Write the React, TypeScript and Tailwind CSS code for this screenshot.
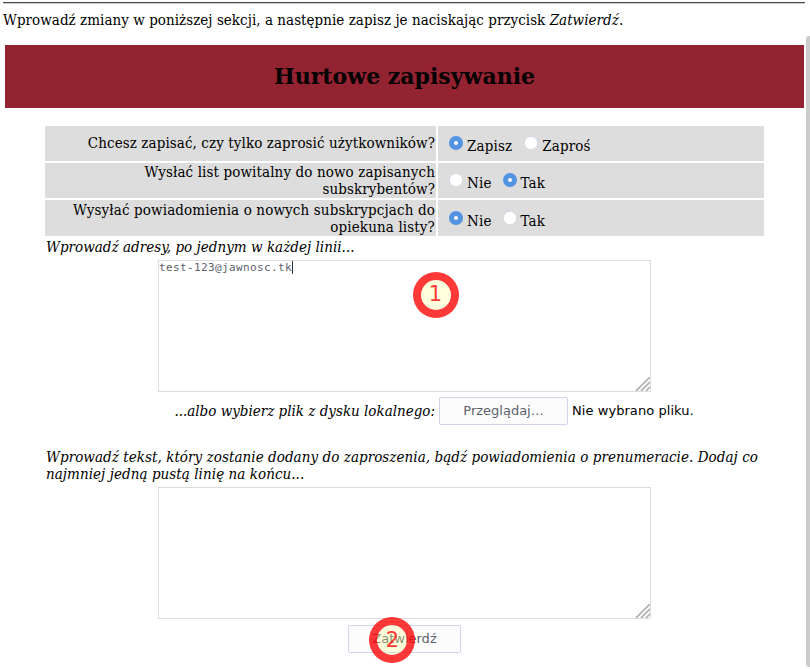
import type { ReactNode } from 'react';

const serif = "font-['DejaVu_Serif_Condensed','DejaVu_Serif',serif] [font-stretch:condensed]";
const sans = "font-['DejaVu_Sans',sans-serif] [font-stretch:normal]";

function Radio({ checked, label }: { checked?: boolean; label: string }) {
  return (
    <label className="flex items-start tracking-[0.14px]">
      <svg width="16" height="16" viewBox="0 0 16 16" className="mr-[3px] shrink-0">
        {checked ? (
          <>
            <circle cx="8" cy="8" r="7" fill="#5294e2" />
            <circle cx="8" cy="8" r="2" fill="#fff" />
          </>
        ) : (
          <circle cx="8" cy="8" r="6.6" fill="#fff" stroke="#cfd6e6" strokeWidth="0.8" />
        )}
      </svg>
      <span className="pt-[3px]">{label}</span>
    </label>
  );
}

function Row({ height, pad, label, children }: { height: string; pad: string; label: ReactNode; children: ReactNode }) {
  return (
    <div className={`flex gap-[2px] ${height}`}>
      <div className="flex w-[391px] items-center justify-end bg-[#dddddd] pr-px text-right whitespace-nowrap">
        <div>{label}</div>
      </div>
      <div className={`flex flex-1 items-start bg-[#dddddd] pl-[10px] ${pad}`}>{children}</div>
    </div>
  );
}

function TextBox({ children }: { children?: ReactNode }) {
  return (
    <div className="relative ml-[113px] h-[132px] w-[493px] border border-[#dcdde3] bg-white">
      {children}
      <svg width="15" height="14" viewBox="0 0 15 14" className="absolute right-0 bottom-0">
        <path d="M1 14L15 0M6 14L15 5M11 14L15 10" stroke="#b4b4b4" strokeWidth="1.8" fill="none" />
      </svg>
    </div>
  );
}

function Marker({ n, place }: { n: number; place: string }) {
  return (
    <div
      className={`absolute flex h-[46px] w-[46px] items-center justify-center rounded-full border-8 border-[#ff0000]/78 bg-[#ffff90]/30 bg-clip-padding text-[21px] leading-none text-[#ff0000]/78 ${sans} ${place}`}
    >
      {n}
    </div>
  );
}

export default function App() {
  return (
    <div className={`relative h-[669px] w-[810px] overflow-hidden bg-white text-[15px] leading-[17px] text-black ${serif}`}>
      <div className="pt-[2px] pl-[3px]">
        <div className="h-[2px] w-[802px] border-t border-[#4a4a4a] bg-[#cccccc]" />
      </div>
      <p className="mt-[8px] pl-[3px] tracking-[0.04px] whitespace-nowrap">
        Wprowadź zmiany w poniższej sekcji, a następnie zapisz je naciskając przycisk <i>Zatwierdź</i>.
      </p>
      <h1 className="mt-[16px] ml-[5px] flex h-[63px] w-[799px] items-center justify-center bg-[#942331] font-['DejaVu_Serif',serif] text-[22px] font-bold [font-stretch:normal]">
        Hurtowe zapisywanie
      </h1>
      <div className="mt-[18px] ml-[45px] w-[719px]">
        <div className="flex flex-col gap-[2px]">
          <Row height="h-[35px]" pad="gap-[11px] pt-[9px]" label={<span className="tracking-[0.09px]">Chcesz zapisać, czy tylko zaprosić użytkowników?</span>}>
            <Radio checked label="Zapisz" />
            <Radio label="Zaproś" />
          </Row>
          <Row
            height="h-[35px]"
            pad="gap-[10px] pt-[9px]"
            label={<span className="tracking-[0.11px]">Wysłać list powitalny do nowo zapisanych<br />subskrybentów?</span>}
          >
            <Radio label="Nie" />
            <Radio checked label="Tak" />
          </Row>
          <Row
            height="h-[36px]"
            pad="gap-[10px] pt-[10px]"
            label={<div className="pt-[2px] tracking-[0.13px]">Wysyłać powiadomienia o nowych subskrypcjach do<br />opiekuna listy?</div>}
          >
            <Radio checked label="Nie" />
            <Radio label="Tak" />
          </Row>
        </div>
        <p className="mt-[3px] h-[21px] pl-px tracking-[0.03px] italic">Wprowadź adresy, po jednym w każdej linii...</p>
        <TextBox>
          <div className="flex items-start font-['DejaVu_Sans_Mono',monospace] text-[11px] leading-[13px] tracking-[0.38px] text-[#5c616c]">
            test-123@jawnosc.tk
            <span className="h-[13px] w-px bg-[#30343c]" />
          </div>
        </TextBox>
        <div className="mt-[5px] flex h-[28px] items-center whitespace-nowrap">
          <span className="w-[390px] pt-px text-right italic">...albo wybierz plik z dysku lokalnego:</span>
          <button className={`ml-[4px] h-[28px] w-[129px] rounded-[2px] border border-[#cfd6e6] bg-[#fbfbfc] pb-[2px] text-[13px] text-[#5c616c] ${sans}`}>
            Przeglądaj…
          </button>
          <span className={`ml-[4px] pb-[2px] text-[13px] tracking-[0.06px] ${sans}`}>Nie wybrano pliku.</span>
        </div>
        <p className="mt-[24px] h-[38px] pl-px tracking-[0.06px] whitespace-nowrap italic">
          Wprowadź tekst, który zostanie dodany do zaproszenia, bądź powiadomienia o prenumeracie. Dodaj co
          <br />
          najmniej jedną pustą linię na końcu...
        </p>
        <TextBox />
        <button className={`mt-[6px] ml-[303px] block h-[28px] w-[113px] rounded-[2px] border border-[#cfd6e6] bg-[#fbfbfc] pb-[2px] text-[13px] text-[#5c616c] ${sans}`}>
          Zatwierdź
        </button>
      </div>
      <Marker n={1} place="left-[412.5px] top-[271.5px]" />
      <Marker n={2} place="left-[369.4px] top-[617.2px]" />
      <div className="absolute top-[36px] left-[806px] h-[631px] w-[8px] rounded-[3px] bg-[#cccccc]" />
    </div>
  );
}
